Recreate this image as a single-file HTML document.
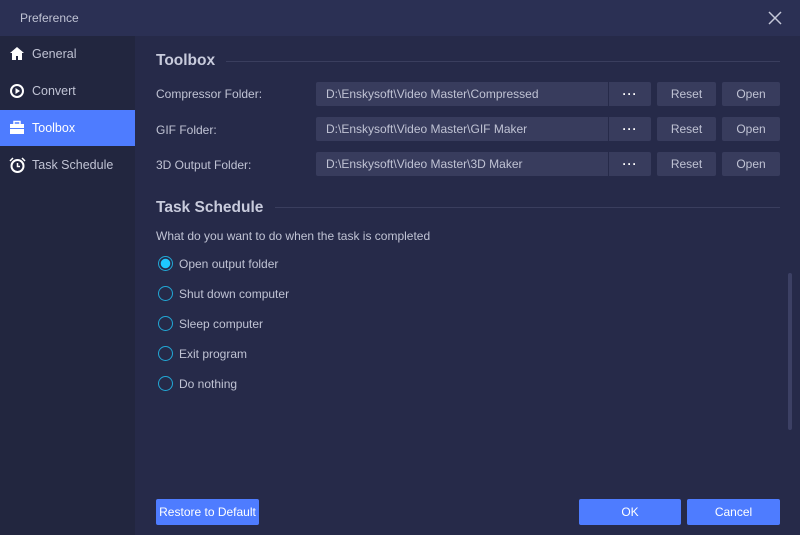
<!DOCTYPE html>
<html><head><style>
*{margin:0;padding:0;box-sizing:border-box}
body{width:800px;height:535px;background:#262a49;font-family:"Liberation Sans",sans-serif;font-size:12px;color:#c0c3d4;position:relative;overflow:hidden}
.abs{position:absolute}
#title{left:0;top:0;width:800px;height:36px;background:#2b3054}
#side{left:0;top:36px;width:135px;height:499px;background:#22263f}
.nav{position:absolute;left:0;width:135px;height:36px;line-height:36px;padding-left:32px;color:#c0c3d4;font-size:12.5px}
.nav svg{position:absolute;left:9px;top:10px}
.act{background:#4e7cff;color:#fff}
h2{position:absolute;font-size:15.5px;font-weight:bold;color:#c8cbdc}
.line{position:absolute;height:1px;background:#3a3e5e}
.lbl{position:absolute;left:156px}
.in{position:absolute;left:316px;width:292px;height:24px;background:#383c5d;border-radius:2px 0 0 2px;line-height:24px;padding-left:10px}
.dots{position:absolute;left:609px;width:42px;height:24px;background:#383c5d;border-radius:0 2px 2px 0;text-align:center;line-height:24px;color:#fff;font-weight:bold;letter-spacing:1px}
.b{position:absolute;height:24px;background:#383c5d;border-radius:2px;text-align:center;line-height:24px}
.r{position:absolute;left:158px;width:15px;height:15px;border:1.5px solid #22a8d6;border-radius:50%}
.rt{position:absolute;left:179px}
.btn{position:absolute;top:499px;height:26px;background:#4e7cff;color:#fff;border-radius:2px;text-align:center;line-height:26px}
</style></head><body>
<div id="title" class="abs"></div>
<div class="abs" style="left:20px;top:11px">Preference</div>
<svg class="abs" style="left:768px;top:11px" width="14" height="14"><path d="M1 1L13 13M13 1L1 13" stroke="#c5c8d8" stroke-width="1.5"/></svg>
<div id="side" class="abs"></div>
<div class="nav" style="top:36px"><svg width="16" height="16"><path d="M8 1L1 7h2v7h4v-4h2v4h4V7h2z" fill="#fff"/></svg>General</div>
<div class="nav" style="top:73px"><svg width="16" height="16"><circle cx="8" cy="8" r="6" fill="none" stroke="#fff" stroke-width="2"/><path d="M6.5 5v6l4.5-3z" fill="#fff"/></svg>Convert</div>
<div class="nav act" style="top:110px"><svg width="16" height="16"><rect x="1" y="4" width="14" height="10" fill="#fff"/><rect x="5" y="1.5" width="6" height="3" fill="none" stroke="#fff" stroke-width="1.5"/><rect x="1" y="8" width="14" height="1" fill="#4e7cff"/></svg>Toolbox</div>
<div class="nav" style="top:147px"><svg width="17" height="17"><circle cx="8.5" cy="9" r="6" fill="none" stroke="#fff" stroke-width="2"/><path d="M8.5 6v3.5h2.5" stroke="#fff" stroke-width="1.5" fill="none"/><path d="M1 4L4 1M16 4L13 1" stroke="#fff" stroke-width="1.5"/></svg>Task Schedule</div>

<h2 style="left:156px;top:52px">Toolbox</h2>
<div class="line" style="left:226px;top:61px;width:554px"></div>
<div class="lbl" style="top:87px">Compressor Folder:</div>
<div class="lbl" style="top:123px">GIF Folder:</div>
<div class="lbl" style="top:158px">3D Output Folder:</div>

<div class="in" style="top:82px">D:\Enskysoft\Video Master\Compressed</div><div class="dots" style="top:82px">···</div>
<div class="b" style="left:657px;width:59px;top:82px">Reset</div><div class="b" style="left:722px;width:58px;top:82px">Open</div>
<div class="in" style="top:117px">D:\Enskysoft\Video Master\GIF Maker</div><div class="dots" style="top:117px">···</div>
<div class="b" style="left:657px;width:59px;top:117px">Reset</div><div class="b" style="left:722px;width:58px;top:117px">Open</div>
<div class="in" style="top:152px">D:\Enskysoft\Video Master\3D Maker</div><div class="dots" style="top:152px">···</div>
<div class="b" style="left:657px;width:59px;top:152px">Reset</div><div class="b" style="left:722px;width:58px;top:152px">Open</div>

<h2 style="left:156px;top:199px">Task Schedule</h2>
<div class="line" style="left:275px;top:207px;width:505px"></div>
<div class="lbl" style="top:229px">What do you want to do when the task is completed</div>

<div class="r" style="top:256px;background:radial-gradient(circle,#1ec8ff 0 4.5px,transparent 5px)"></div><div class="rt" style="top:257px">Open output folder</div>
<div class="r" style="top:286px"></div><div class="rt" style="top:287px">Shut down computer</div>
<div class="r" style="top:316px"></div><div class="rt" style="top:317px">Sleep computer</div>
<div class="r" style="top:346px"></div><div class="rt" style="top:347px">Exit program</div>
<div class="r" style="top:376px"></div><div class="rt" style="top:377px">Do nothing</div>

<div class="abs" style="left:788px;top:273px;width:4px;height:157px;background:#3c4064;border-radius:2px"></div>

<div class="btn" style="left:156px;width:103px">Restore to Default</div>
<div class="btn" style="left:579px;width:102px">OK</div>
<div class="btn" style="left:687px;width:93px">Cancel</div>
</body></html>
